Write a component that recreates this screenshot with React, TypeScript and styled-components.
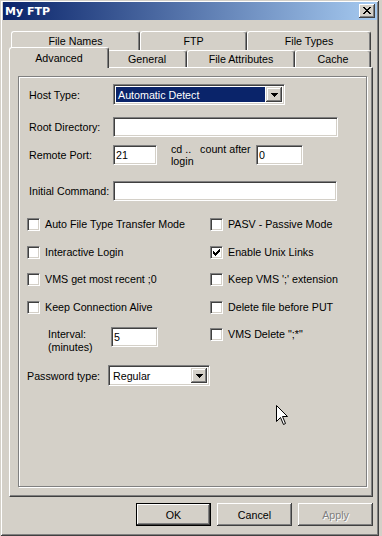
import React from 'react';
import styled, { createGlobalStyle } from 'styled-components';

const FACE = '#D4D0C8';
const SHADOW = '#808080';
const DARK = '#404040';
const NAVY = '#0A246A';

const GlobalStyle = createGlobalStyle`
  html, body {
    margin: 0;
    padding: 0;
    background: ${FACE};
  }
  body {
    font-family: "Liberation Sans", Arial, sans-serif;
    font-size: 10.7px;
    color: #000;
  }
`;

const Window = styled.div`
  position: relative;
  width: 379px;
  height: 536px;
  box-sizing: border-box;
  padding: 2px 2px 2px 3px;
  background: ${FACE};
  box-shadow: inset 1px 1px 0 ${FACE}, inset -1px -1px 0 ${DARK},
    inset 2px 2px 0 #fff, inset -2px -2px 0 ${SHADOW};
  display: flex;
  flex-direction: column;
`;

const TitleBar = styled.div`
  height: 18px;
  background: linear-gradient(90deg, ${NAVY} 0%, #A6CAF0 100%);
  display: flex;
  align-items: center;
  justify-content: space-between;
  padding: 0 2px 0 2px;
`;

const Caption = styled.span`
  font-family: "DejaVu Sans", Verdana, sans-serif;
  font-weight: bold;
  font-size: 11px;
  color: #fff;
`;

const CloseButton = styled.div`
  width: 16px;
  height: 14px;
  box-sizing: border-box;
  background: ${FACE};
  box-shadow: inset -1px -1px 0 ${DARK}, inset 1px 1px 0 #fff,
    inset -2px -2px 0 ${SHADOW};
  display: flex;
  align-items: center;
  justify-content: center;
  padding: 0 1px 1px 0;
`;

const Body = styled.div`
  padding: 11px 4px 0 6px;
  display: flex;
  flex-direction: column;
`;

const TabStrip = styled.div`
  display: flex;
  flex-direction: column;
  padding: 0 2px;
`;

const TabRow = styled.div<{ $height: number }>`
  display: flex;
  align-items: flex-end;
  height: ${(p) => p.$height}px;
`;

const Tab = styled.div<{ $w: number; $active?: boolean; $h: number }>`
  position: relative;
  box-sizing: border-box;
  width: ${(p) => (p.$active ? p.$w + 4 : p.$w)}px;
  height: ${(p) => p.$h}px;
  margin: ${(p) => (p.$active ? '0 -2px -1px -2px' : '0')};
  z-index: ${(p) => (p.$active ? 2 : 0)};
  background: ${FACE};
  border-top: 1px solid #fff;
  border-left: 1px solid #fff;
  border-right: 1px solid ${DARK};
  border-radius: 3px 3px 0 0;
  box-shadow: inset -1px 0 0 ${SHADOW};
  display: flex;
  align-items: center;
  justify-content: center;
  padding-bottom: ${(p) => (p.$active ? 1 : 0)}px;
  white-space: nowrap;
`;

const Panel = styled.div`
  position: relative;
  z-index: 1;
  box-sizing: border-box;
  width: 364px;
  height: 430px;
  border-top: 1px solid #fff;
  border-left: 1px solid #fff;
  border-right: 1px solid ${DARK};
  border-bottom: 1px solid ${DARK};
  box-shadow: inset -1px -1px 0 ${SHADOW};
  padding: 8px 0 0 8px;
`;

const GroupBox = styled.div`
  box-sizing: border-box;
  width: 349px;
  height: 411px;
  border: 1px solid ${SHADOW};
  box-shadow: inset 1px 1px 0 #fff, 1px 1px 0 #fff;
  padding: 0 0 0 8px;
  display: flex;
  flex-direction: column;
`;

const FieldRow = styled.div<{ $top: number; $indent?: number; $h?: number }>`
  display: flex;
  align-items: center;
  height: ${(p) => p.$h ?? 20}px;
  margin-top: ${(p) => p.$top}px;
  padding-left: ${(p) => p.$indent ?? 2}px;
`;

const FieldLabel = styled.span<{ $w: number }>`
  width: ${(p) => p.$w}px;
  flex: none;
  white-space: nowrap;
`;

const Edit = styled.input<{ $w: number }>`
  width: ${(p) => p.$w}px;
  height: 20px;
  box-sizing: border-box;
  margin: 0;
  padding: 0 3px 0 2px;
  background: #fff;
  border-style: solid;
  border-width: 1px;
  border-color: ${SHADOW} #fff #fff ${SHADOW};
  box-shadow: inset 1px 1px 0 ${DARK}, inset -1px -1px 0 ${FACE};
  font: inherit;
  color: #000;
  outline: none;
`;

const Combo = styled.div<{ $w: number }>`
  width: ${(p) => p.$w}px;
  height: 21px;
  box-sizing: border-box;
  background: #fff;
  border-style: solid;
  border-width: 1px;
  border-color: ${SHADOW} #fff #fff ${SHADOW};
  box-shadow: inset 1px 1px 0 ${DARK}, inset -1px -1px 0 ${FACE};
  padding: 2px;
  display: flex;
  align-items: stretch;
`;

const ComboText = styled.div<{ $selected?: boolean }>`
  flex: 1;
  background: ${(p) => (p.$selected ? NAVY : '#fff')};
  color: ${(p) => (p.$selected ? '#fff' : '#000')};
  display: flex;
  align-items: center;
  padding-left: 2px;
  margin-right: 1px;
  white-space: nowrap;
`;

const DropButton = styled.div`
  width: 16px;
  box-sizing: border-box;
  background: ${FACE};
  box-shadow: inset -1px -1px 0 ${DARK}, inset 1px 1px 0 ${FACE},
    inset -2px -2px 0 ${SHADOW}, inset 2px 2px 0 #fff;
  display: flex;
  align-items: center;
  justify-content: center;
`;

const Note = styled.div`
  width: 85px;
  margin-left: 14px;
  line-height: 12px;
  flex: none;
  white-space: nowrap;
`;

const CheckGrid = styled.div`
  display: grid;
  grid-template-columns: 183px 1fr;
  grid-template-rows: repeat(4, 27.5px) auto;
  grid-auto-flow: column;
  margin-top: 17px;
`;

const CheckItem = styled.div`
  display: flex;
  align-items: flex-start;
  gap: 5px;
  white-space: nowrap;
`;

const CheckLabel = styled.span`
  line-height: 13px;
`;

const Box = styled.span`
  width: 13px;
  height: 13px;
  box-sizing: border-box;
  flex: none;
  background: #fff;
  border-style: solid;
  border-width: 1px;
  border-color: ${SHADOW} #fff #fff ${SHADOW};
  box-shadow: inset 1px 1px 0 ${DARK}, inset -1px -1px 0 ${FACE};
  display: flex;
  padding: 2px 0 0 2px;
`;

const IntervalRow = styled.div`
  display: flex;
  align-items: flex-start;
  padding-left: 21px;
`;

const IntervalLabel = styled.div`
  width: 63px;
  line-height: 13px;
`;

const IntervalEdit = styled(Edit)`
  margin-top: -1px;
`;

const ButtonBar = styled.div`
  display: flex;
  justify-content: flex-end;
  gap: 6px;
  margin-top: 6px;
`;

const Button = styled.div<{ $default?: boolean; $disabled?: boolean }>`
  width: 75px;
  height: 23px;
  box-sizing: border-box;
  background: ${FACE};
  border: ${(p) => (p.$default ? '1px solid #000' : 'none')};
  box-shadow: inset -1px -1px 0 ${DARK}, inset 1px 1px 0 #fff,
    inset -2px -2px 0 ${SHADOW}, inset 2px 2px 0 ${FACE};
  display: flex;
  align-items: center;
  justify-content: center;
  color: ${(p) => (p.$disabled ? SHADOW : '#000')};
  text-shadow: ${(p) => (p.$disabled ? '1px 1px 0 #fff' : 'none')};
`;

const Cursor = styled.svg`
  position: absolute;
  left: 276px;
  top: 405px;
`;

function CheckBox({ label, checked }: { label: string; checked?: boolean }) {
  return (
    <CheckItem>
      <Box>
        {checked && (
          <svg width="7" height="7" viewBox="0 0 7 7">
            <path
              d="M6 0h1v1H6zM5 1h2v1H5zM0 2h1v1H0zM4 2h3v1H4zM0 3h2v1H0zM3 3h3v1H3zM0 4h5v1H0zM1 5h3v1H1zM2 6h1v1H2z"
              fill="#000"
            />
          </svg>
        )}
      </Box>
      <CheckLabel>{label}</CheckLabel>
    </CheckItem>
  );
}

function DropArrow() {
  return (
    <svg width="7" height="4" viewBox="0 0 7 4">
      <path d="M0 0h7v1H0zM1 1h5v1H1zM2 2h3v1H2zM3 3h1v1H3z" fill="#000" />
    </svg>
  );
}

const backTabs = [
  { label: 'File Names', w: 129 },
  { label: 'FTP', w: 107 },
  { label: 'File Types', w: 124 },
];

const frontTabs = [
  { label: 'Advanced', w: 96, active: true },
  { label: 'General', w: 80 },
  { label: 'File Attributes', w: 108 },
  { label: 'Cache', w: 76 },
];

export default function App(): JSX.Element {
  return (
    <>
      <GlobalStyle />
      <Window>
        <TitleBar>
          <Caption>My FTP</Caption>
          <CloseButton>
            <svg width="8" height="7" viewBox="0 0 8 7">
              <path
                d="M0 0h2v1H0zM6 0h2v1H6zM1 1h2v1H1zM5 1h2v1H5zM2 2h4v1H2zM3 3h2v1H3zM2 4h4v1H2zM1 5h2v1H1zM5 5h2v1H5zM0 6h2v1H0zM6 6h2v1H6z"
                fill="#000"
              />
            </svg>
          </CloseButton>
        </TitleBar>
        <Body>
          <TabStrip>
            <TabRow $height={19}>
              {backTabs.map((t) => (
                <Tab key={t.label} $w={t.w} $h={19}>
                  {t.label}
                </Tab>
              ))}
            </TabRow>
            <TabRow $height={17}>
              {frontTabs.map((t) => (
                <Tab key={t.label} $w={t.w} $h={t.active ? 21 : 17} $active={t.active}>
                  {t.label}
                </Tab>
              ))}
            </TabRow>
          </TabStrip>
          <Panel>
            <GroupBox>
              <FieldRow $top={7} $h={21}>
                <FieldLabel $w={84}>Host Type:</FieldLabel>
                <Combo $w={172}>
                  <ComboText $selected>Automatic Detect</ComboText>
                  <DropButton>
                    <DropArrow />
                  </DropButton>
                </Combo>
              </FieldRow>
              <FieldRow $top={12}>
                <FieldLabel $w={84}>Root Directory:</FieldLabel>
                <Edit $w={225} readOnly value="" />
              </FieldRow>
              <FieldRow $top={8}>
                <FieldLabel $w={84}>Remote Port:</FieldLabel>
                <Edit $w={44} readOnly value="21" />
                <Note>
                  cd ..&nbsp;&nbsp; count after
                  <br />
                  login
                </Note>
                <Edit $w={47} readOnly value="0" />
              </FieldRow>
              <FieldRow $top={16}>
                <FieldLabel $w={84}>Initial Command:</FieldLabel>
                <Edit $w={224} readOnly value="" />
              </FieldRow>
              <CheckGrid>
                <CheckBox label="Auto File Type Transfer Mode" />
                <CheckBox label="Interactive Login" />
                <CheckBox label="VMS get most recent ;0" />
                <CheckBox label="Keep Connection Alive" />
                <IntervalRow>
                  <IntervalLabel>
                    Interval:
                    <br />
                    (minutes)
                  </IntervalLabel>
                  <IntervalEdit $w={47} readOnly value="5" />
                </IntervalRow>
                <CheckBox label="PASV - Passive Mode" />
                <CheckBox label="Enable Unix Links" checked />
                <CheckBox label="Keep VMS ';' extension" />
                <CheckBox label="Delete file before PUT" />
                <CheckBox label={'VMS Delete ";*"'} />
              </CheckGrid>
              <FieldRow $top={11} $indent={0} $h={21}>
                <FieldLabel $w={81}>Password type:</FieldLabel>
                <Combo $w={102}>
                  <ComboText>Regular</ComboText>
                  <DropButton>
                    <DropArrow />
                  </DropButton>
                </Combo>
              </FieldRow>
            </GroupBox>
          </Panel>
          <ButtonBar>
            <Button $default>OK</Button>
            <Button>Cancel</Button>
            <Button $disabled>Apply</Button>
          </ButtonBar>
        </Body>
        <Cursor width="12" height="21" viewBox="0 0 12 21">
          <path
            d="M0.5 0.5V16.5L4.5 12.5L7.5 19.5L9.5 18.5L6.5 11.5H11.5Z"
            fill="#fff"
            stroke="#000"
            strokeWidth="1"
          />
        </Cursor>
      </Window>
    </>
  );
}
